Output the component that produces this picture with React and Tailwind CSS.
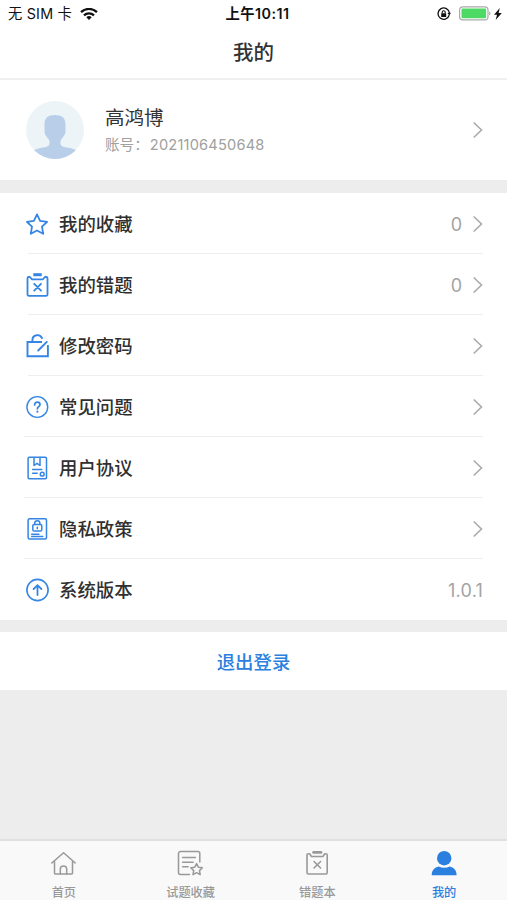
const Chevron = () => (
  <svg width="12" height="18" viewBox="0 0 12 18" fill="none" stroke="#aaaaaa" strokeWidth="1.6">
    <path d="M1.7 1.5 9.5 9l-7.800 7.500" />
  </svg>
);

const Icon = ({ children }) => (
  <svg
    width="26"
    height="26"
    viewBox="0 0 26 26"
    fill="none"
    stroke="currentColor"
    strokeWidth="1.8"
    strokeLinejoin="round"
    strokeLinecap="round"
  >
    {children}
  </svg>
);

const StarIcon = () => (
  <Icon>
    <path d="M13 3.400 16.100 9.800l7 1-5.100 4.900 1.200 7.100L13 19.500l-6.200 3.300L8 15.700l-5.100-4.900 7-1z" />
  </Icon>
);

const WrongIcon = () => (
  <Icon>
    <path d="M5.200 5H4.800a1.300 1.300 0 0 0-1.300 1.300v16.200a1.300 1.300 0 0 0 1.300 1.300h17.400a1.300 1.300 0 0 0 1.300-1.300V6.300A1.300 1.300 0 0 0 22.200 5h-1.300L19 7.300H8L5.900 5z" />
    <path d="M9.300 2.700h8.400" strokeWidth="3" strokeLinecap="butt" />
    <path d="m10.200 11.800 6.800 6.900m0-6.900-6.800 6.900" />
  </Icon>
);

const PasswordIcon = () => (
  <Icon>
    <path d="M18 9H3.500v14.300h20.400V12" strokeWidth="1.9" strokeLinecap="butt" strokeLinejoin="miter" />
    <path d="M8.400 8.800V7a5 5 0 0 1 9.600-1.800" strokeWidth="1.900" />
    <path d="m14.200 17.500 8.600-8.600" strokeWidth="1.900" />
  </Icon>
);

const HelpIcon = () => (
  <Icon>
    <circle cx="13.3" cy="13" r="10.4" strokeWidth="1.4" />
    <path d="M10.600 10.900c0-1.700 1.100-2.700 2.700-2.700s2.700 1 2.700 2.400c0 2-2.600 2.200-2.600 4.200" strokeWidth="1.700" />
    <path d="M13.400 17.600v.1" strokeWidth="2" />
  </Icon>
);

const AgreementIcon = () => (
  <Icon>
    <g strokeWidth="1.5">
      <rect x="4.100" y="2.200" width="18.400" height="21.600" rx="1.200" />
      <path d="M10 2.500v8l3-2.200 3 2.200v-8M8.600 14.600h9.200M8.600 18.200h4.600" />
      <circle cx="18.200" cy="19.200" r="1.900" />
    </g>
  </Icon>
);

const PrivacyIcon = () => (
  <Icon>
    <g strokeWidth="1.5">
      <rect x="4.100" y="2.700" width="18.400" height="20.300" rx="1.500" />
      <rect x="8.800" y="8.600" width="9" height="6.400" rx="1.300" />
      <path d="M10.700 8.600V7.300a2.600 2.600 0 0 1 5.200 0v1.300M13.300 11.200v1.600M7.700 18.200h7.200M7.700 20.400h11" />
    </g>
  </Icon>
);

const VersionIcon = () => (
  <Icon>
    <circle cx="13.500" cy="13" r="10.600" strokeWidth="1.600" />
    <path d="M13.500 18V8.600M9.600 12l3.900-3.800 3.900 3.800" strokeLinejoin="miter" />
  </Icon>
);

const HomeIcon = () => (
  <Icon>
    <g strokeWidth="1.5">
      <path d="M1.800 13 13.600 2.700 25.200 13M4.500 11.600v11.300a1.200 1.200 0 0 0 1.200 1.200h15.600a1.200 1.200 0 0 0 1.200-1.200V11.600" />
      <path d="M10.300 23.800v-4.600a3.200 3.200 0 0 1 6.400 0v4.600" />
    </g>
  </Icon>
);

const FavoritesIcon = () => (
  <Icon>
    <g strokeWidth="1.500">
      <path d="M12.500 24.500H3.500a2 2 0 0 1-2-2v-19a2 2 0 0 1 2-2h17.300a2 2 0 0 1 2 2V12" />
      <path d="M5.600 7.600h12.800M5.600 12.200h10.500M5.600 16.800h5.500" />
      <path d="m19.600 13.600 1.800 3.600 4 .6-2.900 2.800.7 4-3.600-1.900-3.600 1.900.7-4-2.900-2.800 4-.6z" />
    </g>
  </Icon>
);

const WrongTabIcon = () => (
  <Icon>
    <g strokeWidth="1.600">
      <path d="M5 3.700h-.6A1.400 1.400 0 0 0 3 5.100v17.500A1.400 1.400 0 0 0 4.400 24h17.400a1.400 1.400 0 0 0 1.400-1.400V5.100a1.400 1.400 0 0 0-1.400-1.400h-1L18.900 6.500H7.500L5.600 3.700z" />
      <path d="M9.600 2.400h7.400" strokeWidth="2.800" />
      <path d="m10 11.500 6.600 6.500m0-6.500L10 18" />
    </g>
  </Icon>
);

const MineIcon = () => (
  <svg width="26" height="26" viewBox="0 0 26 26" fill="currentColor">
    <circle cx="13.200" cy="8.200" r="7.200" />
    <path d="M.7 25.200c0-5.200 3-7.800 7-8.700 3.500 1.700 7.500 1.700 11 0 4 .9 6.900 3.500 6.900 8.700z" />
  </svg>
);

const menu = [
  { label: '我的收藏', icon: StarIcon, value: '0', line: 'ml-7' },
  { label: '我的错题', icon: WrongIcon, value: '0', line: 'ml-7' },
  { label: '修改密码', icon: PasswordIcon, line: 'ml-7' },
  { label: '常见问题', icon: HelpIcon, line: 'ml-6' },
  { label: '用户协议', icon: AgreementIcon, line: 'ml-6' },
  { label: '隐私政策', icon: PrivacyIcon, line: 'ml-6' },
  { label: '系统版本', icon: VersionIcon, value: '1.0.1', last: true },
];

const tabs = [
  { label: '首页', icon: HomeIcon },
  { label: '试题收藏', icon: FavoritesIcon },
  { label: '错题本', icon: WrongTabIcon },
  { label: '我的', icon: MineIcon, active: true },
];

const StatusBar = () => (
  <div className="grid h-7 grid-cols-3 items-center pl-2 pr-[5px] text-[14.3px] leading-7 text-[#111]">
    <div className="flex items-center gap-2 whitespace-nowrap">
      <span className="tracking-[0.2px]">无 SIM 卡</span>
      <svg width="18" height="13" viewBox="0 0 18 13" fill="none" stroke="#111" strokeWidth="2.3">
        <path d="M1 4.200a11.500 11.500 0 0 1 16 0M4 7.300a7.200 7.200 0 0 1 10 0" />
        <path d="M9 12 6.300 9.200a3.900 3.900 0 0 1 5.400 0z" fill="#111" stroke="none" />
      </svg>
    </div>
    <div className="whitespace-nowrap pl-[5px] text-center font-semibold tracking-[0.45px]">上午10:11</div>
    <div className="flex items-center justify-end pb-px">
      <svg className="mr-2" width="14" height="14" viewBox="0 0 14 14" fill="none" stroke="#111">
        <path d="M12.200 8.300A5.700 5.700 0 1 1 12.400 6" strokeWidth="1.300" />
        <path d="m10.400 6 3.500-.2-1.500 2.700z" fill="#111" stroke="none" />
        <rect x="4.200" y="6.200" width="5" height="3.800" rx=".5" fill="#111" stroke="none" />
        <path d="M5.200 6.500V5.200a1.500 1.500 0 0 1 3 0v1.300" strokeWidth="1.100" />
      </svg>
      <svg width="32" height="15" viewBox="0 0 32 15">
        <rect x=".6" y=".9" width="28.400" height="13" rx="3.200" fill="#fff" stroke="#aaa" strokeWidth="1.200" />
        <rect x="2.500" y="2.600" width="24.600" height="9.600" rx="1.200" fill="#4cd964" />
        <path d="M30.200 5.200c1.800.8 1.800 3.600 0 4.400z" fill="#aaa" />
      </svg>
      <svg className="ml-[3px]" width="8" height="12" viewBox="0 0 8 12" fill="#111">
        <path d="M5.800 0 0 6.800h3L1.700 12 7.800 5H4.600z" />
      </svg>
    </div>
  </div>
);

const Avatar = () => (
  <svg width="58" height="58" viewBox="0 0 58 58">
    <clipPath id="avatar">
      <circle cx="29" cy="29" r="29" />
    </clipPath>
    <circle cx="29" cy="29" r="29" fill="#edf4f8" />
    <path
      clipPath="url(#avatar)"
      fill="#b9cfe9"
      d="M29 14c7.300 0 10.500 3.300 10.500 9v7c0 4-2.300 6-4.500 8.700-1.500 4.600-.2 6.400 4 7.600 5 .8 9 1.500 12 3.700L44 58H14L7 50c3-2.200 7-2.900 12-3.700 4.200-1.200 5.500-3 4-7.600-2.200-2.700-4.500-4.700-4.500-8.700v-7c0-5.700 3.200-9 10.500-9z"
    />
  </svg>
);

const MenuRow = ({ item }) => {
  const RowIcon = item.icon;
  return (
    <div className="flex h-[61px] flex-col">
      <div className="flex flex-1 items-center pl-6 pr-[23px] pt-px">
        <span className="text-[#3485e4]">
          <RowIcon />
        </span>
        <span className="ml-[9px] flex-1 pt-[2px] text-[18.4px] font-medium text-[#303030]">{item.label}</span>
        {item.value && (
          <span className={item.last ? 'mr-px text-[18px] tracking-[0.2px] text-[#a3a3a3]' : 'mr-[10px] pt-px text-[18px] text-[#a3a3a3]'}>
            {item.value}
          </span>
        )}
        {!item.last && <Chevron />}
      </div>
      {!item.last && <div className={`${item.line} mr-6 h-px bg-[#eeeeee]`} />}
    </div>
  );
};

const App = () => (
  <div className="flex h-[900px] w-[507px] flex-col overflow-hidden bg-[#ededed] font-['Inter','Noto_Sans_CJK_SC',sans-serif]">
    <header className="h-20 border-b-2 border-[#f0f0f0] bg-white">
      <StatusBar />
      <h1 className="text-center text-[20.5px] font-medium leading-[50px] text-[#333]">我的</h1>
    </header>

    <section className="flex h-[100px] items-center bg-white pl-[26px] pr-[23px]">
      <Avatar />
      <div className="ml-[21px] flex-1">
        <div className="pt-px text-[19.5px] leading-7 text-[#333]">高鸿博</div>
        <div className="text-[14.6px] leading-[26px] text-[#a0a0a0]">
          账号：<span className="ml-px tracking-[0.2px]">2021106450648</span>
        </div>
      </div>
      <Chevron />
    </section>

    <section className="mt-[13px] bg-white">
      {menu.map((item) => (
        <MenuRow key={item.label} item={item} />
      ))}
    </section>

    <button className="mt-3 h-[58px] bg-white pt-[3px] text-[18.4px] font-medium text-[#2b80df]">退出登录</button>

    <nav className="mt-auto grid h-[61px] grid-cols-4 border-t-2 border-[#e0e0e0] bg-[#f9f9f9]">
      {tabs.map((tab) => {
        const TabIcon = tab.icon;
        return (
          <div
            key={tab.label}
            className={`flex flex-col items-center pt-[9px] ${tab.active ? 'text-[#2b80df]' : 'text-[#999]'}`}
          >
            <TabIcon />
            <span className="mt-[7px] pl-px text-[12.2px] font-medium leading-[19px]">{tab.label}</span>
          </div>
        );
      })}
    </nav>
  </div>
);

export default App;
